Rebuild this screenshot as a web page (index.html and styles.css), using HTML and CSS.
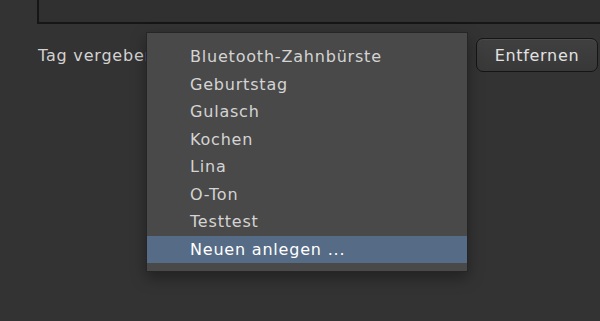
FILE: index.html
```html
<!DOCTYPE html>
<html lang="de">
<head>
    <meta charset="UTF-8">
    <title>Tag vergeben</title>
    <link rel="stylesheet" href="styles.css">
</head>
<body>
    <!-- Notizfeld (oben abgeschnitten) -->
    <div class="note-field"></div>

    <!-- Tag-Zeile -->
    <div class="tag-row">
        <span class="tag-label">Tag vergeben:</span>
        <button class="btn-remove">Entfernen</button>
    </div>

    <!-- Aufgeklapptes Popup-Menü -->
    <ul class="tag-menu">
        <li class="tag-item">Bluetooth-Zahnbürste</li>
        <li class="tag-item">Geburtstag</li>
        <li class="tag-item">Gulasch</li>
        <li class="tag-item">Kochen</li>
        <li class="tag-item">Lina</li>
        <li class="tag-item">O-Ton</li>
        <li class="tag-item">Testtest</li>
        <li class="tag-item selected">Neuen anlegen ...</li>
    </ul>
</body>
</html>
```

FILE: styles.css
```css
* {
    margin: 0;
    padding: 0;
    box-sizing: border-box;
}

body {
    font-family: "DejaVu Sans", "Liberation Sans", sans-serif;
    font-size: 16px;
    letter-spacing: 0.8px;
    background-color: #333333;
    color: #d6d6d6;
    width: 600px;
    height: 321px;
    overflow: hidden;
    position: relative;
}

.note-field {
    margin-left: 37px;
    height: 24px;
    background: #303030;
    border: 2px solid #161616;
    border-top: none;
    border-right: none;
}

.tag-row {
    display: flex;
    align-items: center;
    justify-content: space-between;
    padding: 14px 2px 0 38px;
}

.tag-label {
    color: #d2d2d2;
    white-space: nowrap;
}

.btn-remove {
    font-family: inherit;
    font-size: 16px;
    letter-spacing: 0.7px;
    color: #e2e2e2;
    width: 122px;
    height: 34px;
    border: 1px solid #151515;
    border-radius: 7px;
    background: linear-gradient(#404040, #383838);
    box-shadow: inset 0 1px 0 rgba(255, 255, 255, 0.06);
}

.tag-menu {
    position: absolute;
    top: 32px;
    left: 146px;
    width: 322px;
    height: 240px;
    list-style: none;
    padding: 10px 0 8px;
    background: #494949;
    border: 1px solid #262626;
    box-shadow: 0 6px 14px rgba(0, 0, 0, 0.35);
}

.tag-item {
    height: 27.5px;
    line-height: 27.5px;
    padding-left: 43px;
    color: #d4d4d4;
}

.tag-item.selected {
    background: #566b85;
    color: #ffffff;
}
```
